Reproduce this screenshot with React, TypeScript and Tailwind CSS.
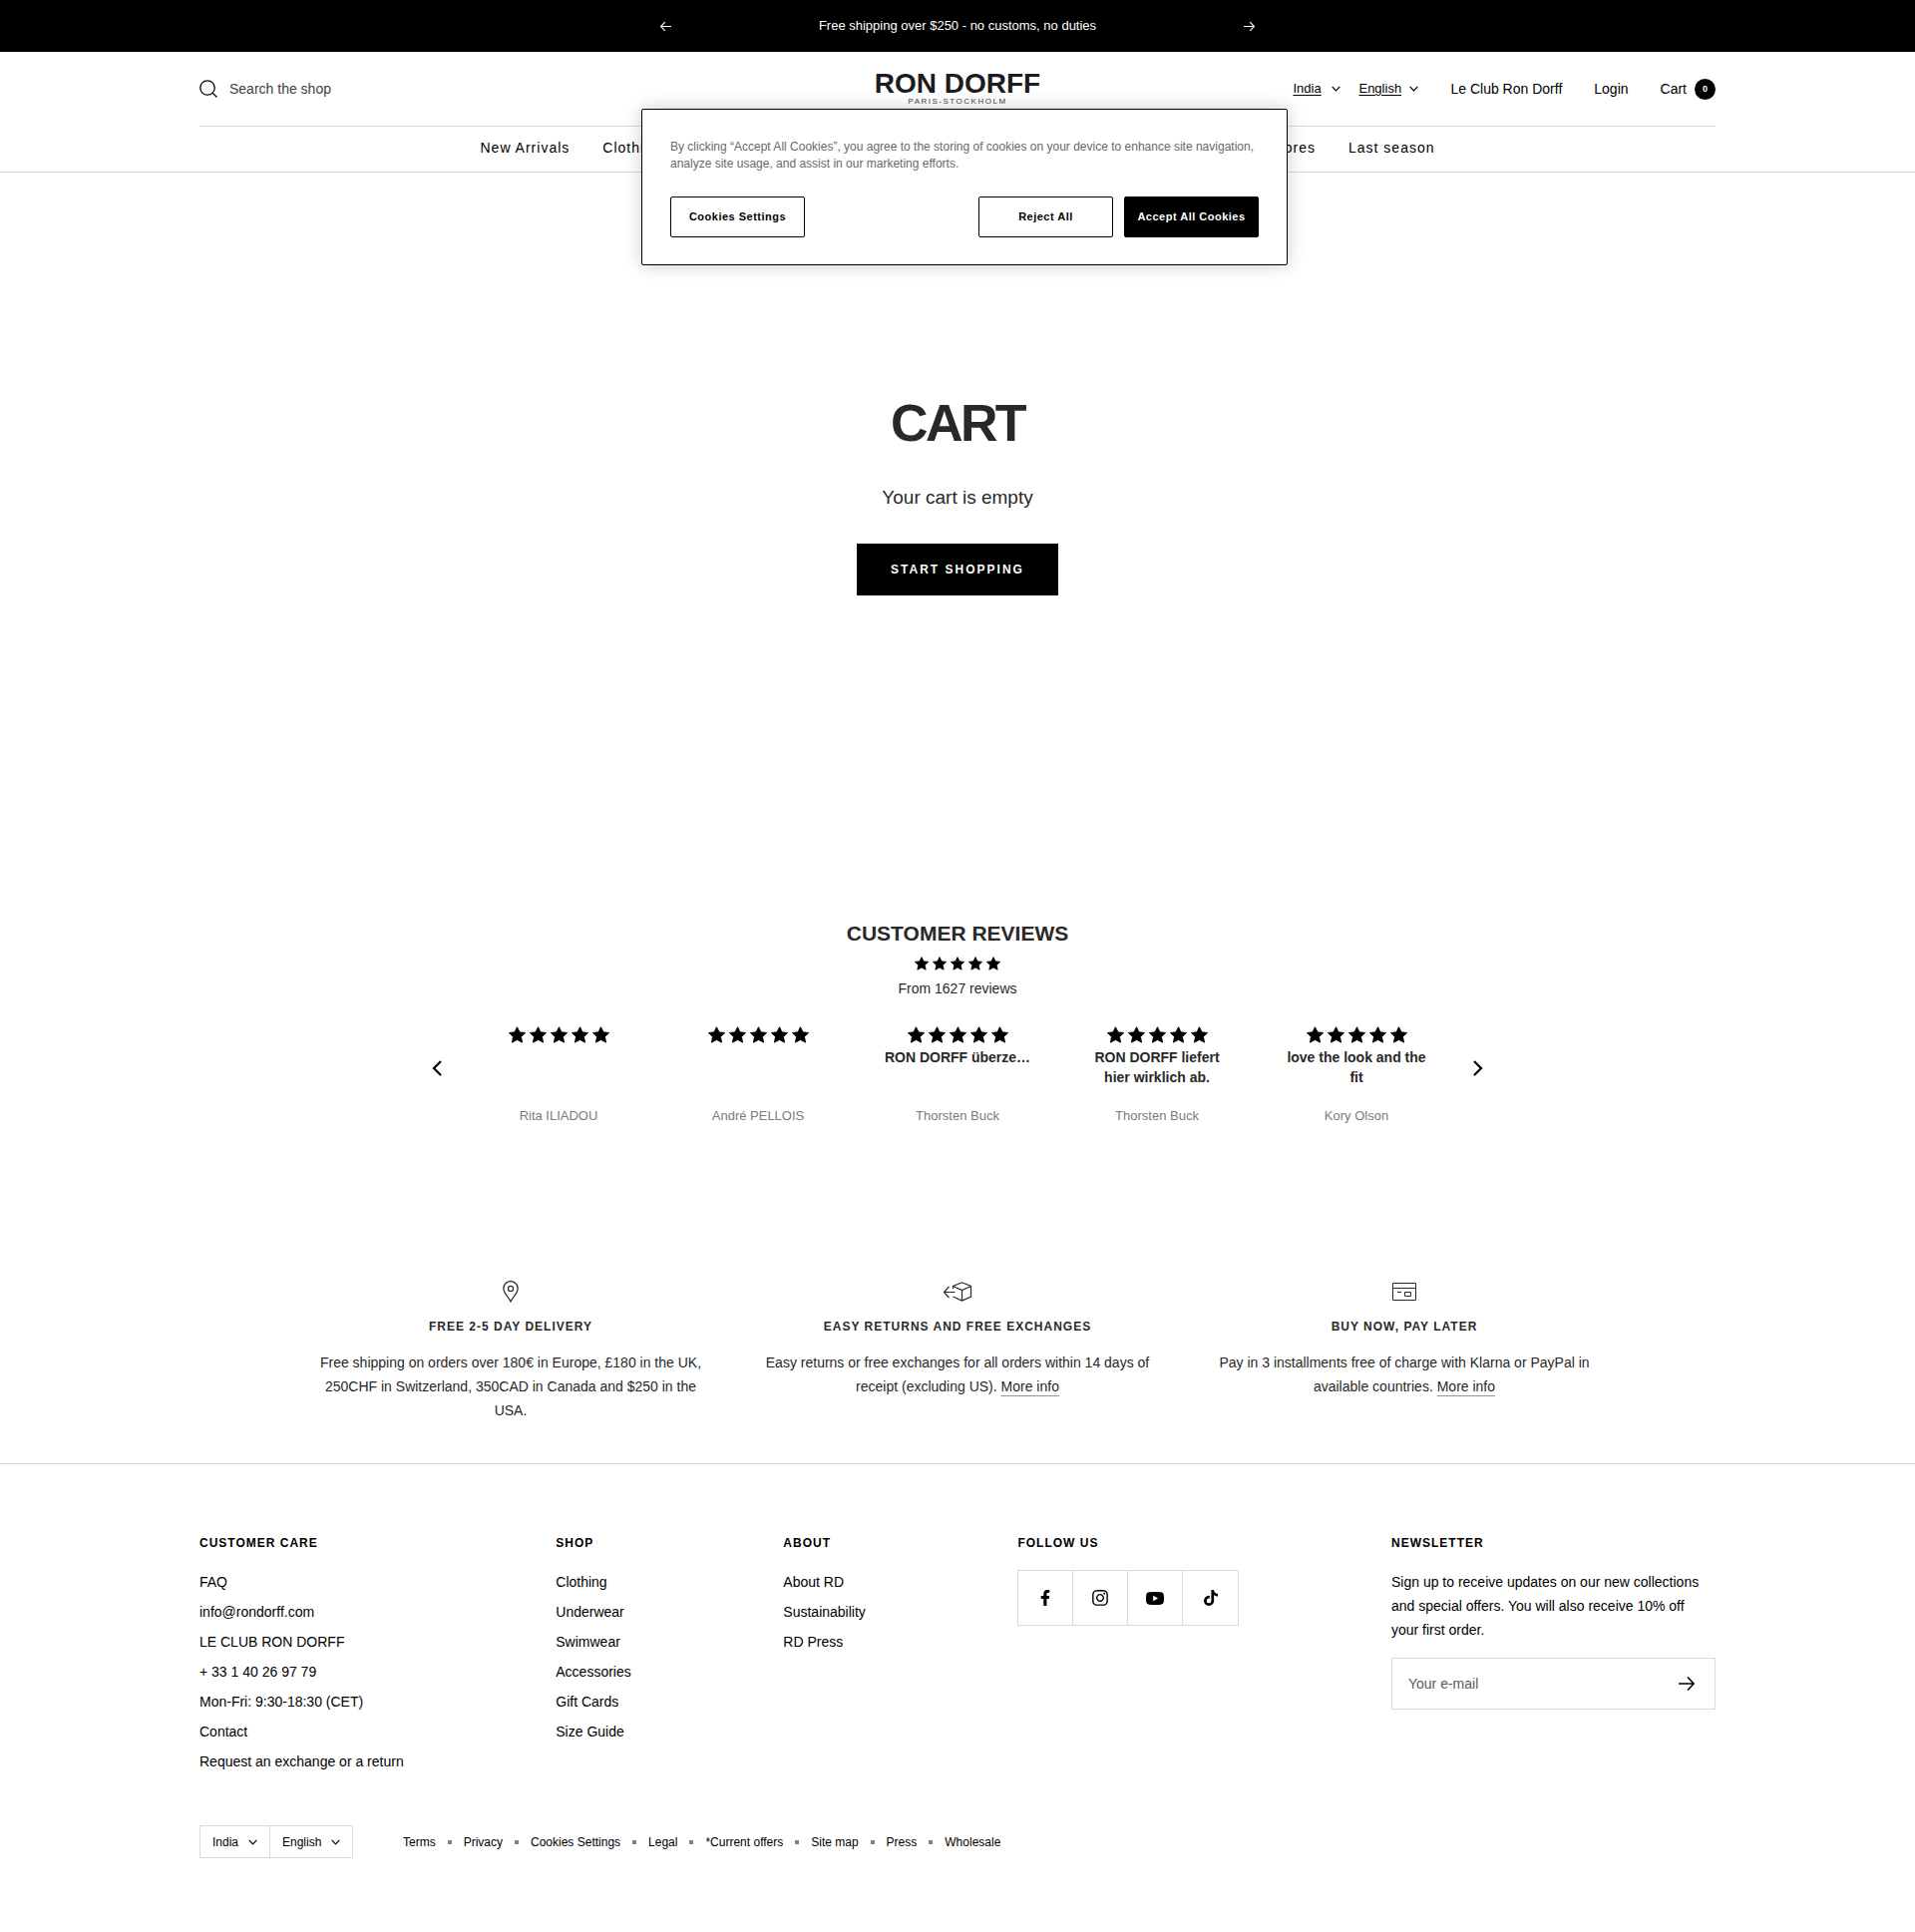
import type { ReactNode } from "react";
import { FaFacebookF, FaInstagram, FaTiktok } from "react-icons/fa";

const reviews = [
  { title: "", author: "Rita ILIADOU" },
  { title: "", author: "André PELLOIS" },
  { title: "RON DORFF überze…", author: "Thorsten Buck" },
  { title: "RON DORFF liefert hier wirklich ab.", author: "Thorsten Buck" },
  { title: "love the look and the fit", author: "Kory Olson" },
];

const footerMenus = [
  {
    title: "CUSTOMER CARE",
    links: [
      "FAQ",
      "info@rondorff.com",
      "LE CLUB RON DORFF",
      "+ 33 1 40 26 97 79",
      "Mon-Fri: 9:30-18:30 (CET)",
      "Contact",
      "Request an exchange or a return",
    ],
  },
  { title: "SHOP", links: ["Clothing", "Underwear", "Swimwear", "Accessories", "Gift Cards", "Size Guide"] },
  { title: "ABOUT", links: ["About RD", "Sustainability", "RD Press"] },
];

const legalLinks = ["Terms", "Privacy", "Cookies Settings", "Legal", "*Current offers", "Site map", "Press", "Wholesale"];

function Arrow({ size, flip = false }: { size: number; flip?: boolean }) {
  return (
    <svg width={size} height={size} viewBox="0 0 16 16" fill="none" stroke="currentColor" strokeWidth="1.6" className={flip ? "rotate-180" : ""} aria-hidden="true">
      <path d="M0 8h15M9 1.5 15.2 8 9 14.5" />
    </svg>
  );
}

function Chevron() {
  return (
    <svg width="9" height="6" viewBox="0 0 9 6" fill="none" stroke="currentColor" strokeWidth="1.2" className="pointer-events-none" aria-hidden="true">
      <path d="m.7.8 3.8 4L8.3.8" />
    </svg>
  );
}

function Stars({ size }: { size: number }) {
  return (
    <div className="flex justify-center gap-1" role="img" aria-label="5 stars">
      {[1, 2, 3, 4, 5].map((n) => (
        <svg key={n} width={size} height={size} viewBox="0 0 20 20" aria-hidden="true">
          <path d="M10 .8 12.9 6.8 19.6 7.7 14.7 12.3 16 19 10 15.8 4 19 5.3 12.3.4 7.7 7.1 6.8Z" stroke="#000" strokeLinejoin="round" />
        </svg>
      ))}
    </div>
  );
}

function Dropdown({ label, value, className, selectClassName = "" }: { label: string; value: string; className: string; selectClassName?: string }) {
  return (
    <label className={`flex items-center ${className}`}>
      <select aria-label={label} className={`appearance-none bg-transparent ${selectClassName}`}>
        <option>{value}</option>
      </select>
      <Chevron />
    </label>
  );
}

function Feature({ icon, title, children }: { icon: ReactNode; title: string; children: ReactNode }) {
  return (
    <div className="text-center">
      <div className="flex h-6 items-center justify-center">{icon}</div>
      <h3 className="mt-[13px] text-xs leading-5 font-bold tracking-[1px]">{title}</h3>
      <p className="mt-3.5 text-sm leading-6">{children}</p>
    </div>
  );
}

function MoreInfo() {
  return (
    <a href="#" className="underline decoration-[#949494] decoration-1 underline-offset-4">
      More info
    </a>
  );
}

function CookieBanner() {
  const button = "h-[41px] w-[135px] rounded-[2px] border border-black text-[11px] font-bold tracking-[0.5px]";
  return (
    <div role="dialog" aria-label="Cookies" className="absolute top-[109px] left-[643px] w-[648px] rounded-[2px] border border-black bg-white px-7 pt-[29px] pb-[27px] shadow-[0_0_18px_rgba(0,0,0,0.2)]">
      <p className="text-xs leading-[17px] text-[#696969]">
        By clicking “Accept All Cookies”, you agree to the storing of cookies on your device to enhance site navigation, analyze site usage, and assist in our marketing efforts.
      </p>
      <div className="mt-6 flex justify-between">
        <button className={`${button} text-black`}>Cookies Settings</button>
        <div className="flex gap-[11px]">
          <button className={`${button} text-black`}>Reject All</button>
          <button className={`${button} bg-black text-white`}>Accept All Cookies</button>
        </div>
      </div>
    </div>
  );
}

export default function App() {
  return (
    <div className="relative bg-white font-['Liberation_Sans',Arial,sans-serif] text-[#282828]">
      <div className="flex h-[52px] items-center justify-center bg-black text-white">
        <div className="flex w-[596px] items-center justify-between">
          <button aria-label="Previous">
            <Arrow size={11} flip />
          </button>
          <p className="text-[13px] leading-5">Free shipping over $250 - no customs, no duties</p>
          <button aria-label="Next">
            <Arrow size={11} />
          </button>
        </div>
      </div>

      <header className="border-b border-[#dadada] text-black">
        <div className="mx-auto max-w-[1520px]">
          <div className="grid h-[75px] grid-cols-[1fr_auto_1fr] items-center border-b border-[#dadada]">
            <label className="flex items-center gap-3">
              <svg width="18" height="18" viewBox="0 0 18 18" fill="none" stroke="currentColor" strokeWidth="1.3" aria-hidden="true">
                <circle cx="8" cy="8" r="7.2" />
                <path d="m13 13 4.5 4.5" />
              </svg>
              <input type="search" aria-label="Search" placeholder="Search the shop" className="w-60 text-sm outline-none placeholder:text-[#404040]" />
            </label>
            <a href="#" className="flex flex-col items-center pb-0.5">
              <span className="text-[28px] leading-7 font-bold whitespace-nowrap text-[#1c1c1e]">RON DORFF</span>
              <span className="text-[8px] leading-2 tracking-[1.5px] text-[#404040]">PARIS-STOCKHOLM</span>
            </a>
            <div className="flex items-center justify-end text-sm">
              <Dropdown label="Country" value="India" className="mr-[18px] gap-2.5 text-[13px]" selectClassName="underline underline-offset-2" />
              <Dropdown label="Language" value="English" className="mr-8 gap-2 text-[13px]" selectClassName="underline underline-offset-2" />
              <a href="#" className="mr-8">Le Club Ron Dorff</a>
              <a href="#" className="mr-8">Login</a>
              <a href="#" className="flex items-center gap-2">
                Cart
                <span className="flex size-[21px] items-center justify-center rounded-full bg-black text-[9px] font-bold text-white">0</span>
              </a>
            </div>
          </div>
          <nav className="mx-auto flex h-[45px] max-w-[957px] items-center justify-between pb-1 text-sm tracking-[1px]">
            <div className="flex gap-[33px]">
              <a href="#">New Arrivals</a>
              <a href="#">Clothing</a>
            </div>
            <div className="flex gap-[33px]">
              <a href="#">Stores</a>
              <a href="#">Last season</a>
            </div>
          </nav>
        </div>
      </header>

      <main>
        <section className="flex flex-col items-center pt-[225px] pb-40">
          <h1 className="text-[52px] leading-[52px] font-bold tracking-tighter">CART</h1>
          <p className="mt-[35px] text-[19px] leading-7">Your cart is empty</p>
          <a href="#" className="mt-8 flex h-[52px] items-center bg-black px-[34px] text-xs font-bold tracking-[2px] text-white">START SHOPPING</a>
        </section>

        <section className="mx-auto flex max-w-[1060px] flex-col pt-[163px]">
          <h2 className="text-center text-[21px] leading-8 font-bold">CUSTOMER REVIEWS</h2>
          <div className="mt-[7px]">
            <Stars size={14} />
          </div>
          <p className="mt-2 text-center text-sm leading-5">From 1627 reviews</p>
          <div className="mt-7 flex items-start justify-between text-black">
            <button aria-label="Previous reviews" className="mt-[34px]">
              <svg width="16" height="16" viewBox="0 0 16 16" fill="none" stroke="currentColor" strokeWidth="2.2" aria-hidden="true">
                <path d="M12 1 5 8l7 7" />
              </svg>
            </button>
            <div className="grid w-[1000px] grid-cols-5 text-[#282828]">
              {reviews.map((review, i) => (
                <article key={i} className="px-6 text-center">
                  <Stars size={17} />
                  <h3 className="mt-1 min-h-10 text-sm leading-5 font-bold">{review.title}</h3>
                  <p className="mt-[19px] text-[13px] leading-5 text-[#7b7b7b]">{review.author}</p>
                </article>
              ))}
            </div>
            <button aria-label="Next reviews" className="mt-[34px]">
              <svg width="16" height="16" viewBox="0 0 16 16" fill="none" stroke="currentColor" strokeWidth="2.2" aria-hidden="true">
                <path d="m4 1 7 7-7 7" />
              </svg>
            </button>
          </div>
        </section>

        <section className="mx-auto grid max-w-[1296px] grid-cols-3 gap-12 pt-[154px] pb-[41px]">
          <Feature
            title="FREE 2-5 DAY DELIVERY"
            icon={
              <svg width="16" height="22" viewBox="0 0 16 22" fill="none" stroke="currentColor" strokeWidth="1.2" aria-hidden="true">
                <path d="M8 21C6.500 17.500.8 12.500.8 7.800A7.200 7.200 0 0 1 15.200 7.800C15.200 12.500 9.500 17.500 8 21Z" />
                <circle cx="8" cy="8" r="2.6" />
              </svg>
            }
          >
            Free shipping on orders over 180€ in Europe, £180 in the UK, 250CHF in Switzerland, 350CAD in Canada and $250 in the USA.
          </Feature>
          <Feature
            title="EASY RETURNS AND FREE EXCHANGES"
            icon={
              <svg width="30" height="20" viewBox="0 0 30 20" fill="none" stroke="currentColor" strokeWidth="1.2" aria-hidden="true">
                <path d="M10.500 7V4.500L19.500.8 28.500 4.500V15L19.500 19 10.500 15M10.500 4.500l9 4 9-4M19.500 8.500V19M6.500 5 1.500 10.500l5 5.500M1.500 10.500h11" />
              </svg>
            }
          >
            Easy returns or free exchanges for all orders within 14 days of receipt (excluding US). <MoreInfo />
          </Feature>
          <Feature
            title="BUY NOW, PAY LATER"
            icon={
              <svg width="24" height="18" viewBox="0 0 24 18" fill="none" stroke="currentColor" aria-hidden="true">
                <path d="M.5.5h23v17H.5zM.5 5.500h23M12.500 9.500h6v4h-6zM5 9.500h4" />
              </svg>
            }
          >
            Pay in 3 installments free of charge with Klarna or PayPal in available countries. <MoreInfo />
          </Feature>
        </section>
      </main>

      <footer className="border-t border-[#dadada] pt-[69px] pb-[71px] text-black">
        <div className="mx-auto max-w-[1520px]">
          <div className="flex items-start justify-between">
            {footerMenus.map((menu) => (
              <div key={menu.title}>
                <h2 className="text-xs leading-5 font-bold tracking-[1px]">{menu.title}</h2>
                <ul className="mt-[17px] flex flex-col gap-1.5 text-sm leading-6">
                  {menu.links.map((link) => (
                    <li key={link}>
                      <a href="#">{link}</a>
                    </li>
                  ))}
                </ul>
              </div>
            ))}
            <div>
              <h2 className="text-xs leading-5 font-bold tracking-[1px]">FOLLOW US</h2>
              <div className="mt-[17px] flex divide-x divide-[#dadada] border border-[#dadada]">
                <a href="#" aria-label="Facebook" className="flex h-[54px] w-[55px] items-center justify-center">
                  <FaFacebookF size={16} />
                </a>
                <a href="#" aria-label="Instagram" className="flex h-[54px] w-[55px] items-center justify-center">
                  <FaInstagram size={18} />
                </a>
                <a href="#" aria-label="YouTube" className="flex h-[54px] w-[55px] items-center justify-center">
                  <svg width="18" height="13" viewBox="0 0 18 13" aria-hidden="true">
                    <path fill="currentColor" fillRule="evenodd" d="M3 .3Q9-.3 15 .3 17.600.6 17.800 3 18.200 6.500 17.800 10 17.600 12.400 15 12.700 9 13.300 3 12.700.4 12.400.2 10-.2 6.500.2 3 .4.6 3 .3ZM7.200 3.700v5.600l4.800-2.800Z" />
                  </svg>
                </a>
                <a href="#" aria-label="TikTok" className="flex h-[54px] w-[55px] items-center justify-center">
                  <FaTiktok size={16} />
                </a>
              </div>
            </div>
            <div className="w-[325px]">
              <h2 className="text-xs leading-5 font-bold tracking-[1px]">NEWSLETTER</h2>
              <p className="mt-[17px] pr-2 text-sm leading-6">
                Sign up to receive updates on our new collections and special offers. You will also receive 10% off your first order.
              </p>
              <form className="mt-4 flex h-[52px] items-center border border-[#dadada] px-4">
                <input type="email" aria-label="Your e-mail" placeholder="Your e-mail" className="min-w-0 flex-1 text-sm outline-none placeholder:text-[#5c5c5c]" />
                <button aria-label="Subscribe" className="mr-1">
                  <Arrow size={16} />
                </button>
              </form>
            </div>
          </div>

          <div className="mt-[52px] flex items-center text-xs">
            <div className="flex h-[33px] divide-x divide-[#dadada] border border-[#dadada]">
              <Dropdown label="Country" value="India" className="gap-[9px] px-3" />
              <Dropdown label="Language" value="English" className="gap-[9px] px-3" />
            </div>
            <ul className="ml-[50px] flex items-center">
              {legalLinks.map((link, i) => (
                <li key={link} className="flex items-center">
                  {i > 0 && <span className="mx-3 size-1 bg-[#808080]" />}
                  <a href="#">{link}</a>
                </li>
              ))}
            </ul>
          </div>
        </div>
      </footer>

      <CookieBanner />
    </div>
  );
}
